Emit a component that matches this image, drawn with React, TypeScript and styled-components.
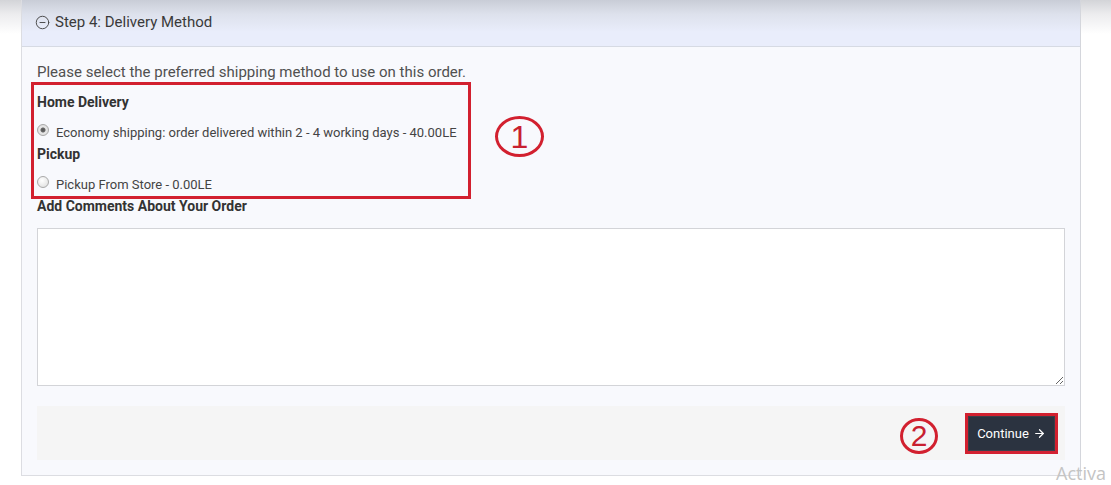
import React from "react";
import styled, { createGlobalStyle } from "styled-components";
import { CircleMinus, ArrowRight } from "lucide-react";

const Global = createGlobalStyle`
  html, body { margin: 0; padding: 0; background: #ffffff; }
  body { font-family: Roboto, "Liberation Sans", Arial, sans-serif; }
  * { box-sizing: border-box; }
`;

const Page = styled.div`
  position: relative;
  width: 1111px;
  height: 485px;
  overflow: hidden;
  padding: 0 30px 0 21px;
  background: linear-gradient(#d3d4d8 0px, #ececee 14px, #ffffff 34px);
`;

const Panel = styled.section`
  border-left: 1px solid #dcdde2;
  border-right: 1px solid #d4d6dc;
  border-bottom: 1px solid #dcdde2;
  background: #f8f9fd;
`;

const Header = styled.header`
  height: 47px;
  display: flex;
  align-items: center;
  gap: 5px;
  padding: 0 0 2px 13px;
  background: linear-gradient(#c9cdd7 0px, #dde1ec 14px, #e9edfb 32px, #e9edfb 100%);
  border-bottom: 1px solid #d6dae3;
  color: #3a3a3a;
  font-size: 15px;
`;

const Body = styled.div`
  padding: 15px 15px 15px 15px;
`;

const Intro = styled.p`
  margin: 0;
  font-size: 15px;
  line-height: 21px;
  color: #505050;
`;

const AnnotatedRow = styled.div`
  display: flex;
  align-items: center;
  gap: 24px;
`;

const RedBox = styled.div`
  width: 440px;
  margin-left: -6px;
  margin-top: -1px;
  border: 3px solid #d2202f;
  padding: 8px 0 2px 3px;
`;

const GroupTitle = styled.div<{ $top?: number }>`
  font-size: 14px;
  line-height: 18px;
  font-weight: 700;
  color: #333;
  margin-top: ${(p) => p.$top ?? 0}px;
`;

const RadioRow = styled.label`
  display: flex;
  align-items: center;
  gap: 7px;
  margin-top: 11px;
  height: 20px;
  padding-left: 0px;
  font-size: 13px;
  color: #444;
`;

const Radio = styled.input.attrs({ type: "radio" })`
  appearance: none;
  margin: 0 0 4px 0;
  width: 12px;
  height: 12px;
  border-radius: 50%;
  border: 1px solid #a9a9a9;
  background: radial-gradient(circle at 40% 35%, #ffffff 0%, #e6e6e6 70%, #cfcfcf 100%);
  &:checked {
    background: radial-gradient(circle, #555 0px, #666 2px, #e8e8e8 3px, #d8d8d8 100%);
  }
`;

const CircleNum = styled.div<{ $w: number; $h: number; $size: number }>`
  width: ${(p) => p.$w}px;
  height: ${(p) => p.$h}px;
  border: 3px solid #d2202f;
  border-radius: 50%;
  display: flex;
  align-items: center;
  justify-content: center;
  color: #c8202f;
  font-family: "Liberation Sans", Arial, sans-serif;
  font-size: ${(p) => p.$size}px;
  font-weight: 400;
  line-height: 1;
  flex-shrink: 0;
`;

const CommentLabel = styled.div`
  font-size: 14px;
  line-height: 18px;
  font-weight: 700;
  color: #333;
  margin-top: -2px;
`;

const Comment = styled.textarea`
  display: block;
  width: 100%;
  height: 158px;
  margin-top: 13px;
  border: 1px solid #d3d4d8;
  background: #ffffff;
  resize: vertical;
  font: inherit;
`;

const Footer = styled.div`
  margin-top: 20px;
  height: 54px;
  background: #f5f5f5;
  display: flex;
  align-items: center;
  justify-content: flex-end;
  gap: 27px;
  padding: 0 7px 0 0;
`;

const ContinueButton = styled.button`
  height: 41px;
  width: 93px;
  border: 3px solid #d2202f;
  background: #2b3340;
  box-shadow: inset 0 0 0 1px #3a3f49;
  color: #fff;
  font-family: Roboto, "Liberation Sans", Arial, sans-serif;
  font-size: 13px;
  display: flex;
  align-items: center;
  justify-content: center;
  gap: 4px;
  padding: 0;
`;

const Watermark = styled.div`
  position: absolute;
  left: 1056px;
  top: 461px;
  font-family: "Open Sans", "DejaVu Sans", sans-serif;
  font-size: 18px;
  color: #c4c4c4;
  white-space: nowrap;
`;

export default function App() {
  return (
    <Page>
      <Global />
      <Panel>
        <Header>
          <CircleMinus size={15} strokeWidth={1.5} color="#444" />
          <span>Step 4: Delivery Method</span>
        </Header>
        <Body>
          <Intro>Please select the preferred shipping method to use on this order.</Intro>
          <AnnotatedRow>
            <RedBox>
              <GroupTitle>Home Delivery</GroupTitle>
              <RadioRow>
                <Radio name="ship" defaultChecked />
                Economy shipping: order delivered within 2 - 4 working days - 40.00LE
              </RadioRow>
              <GroupTitle $top={3}>Pickup</GroupTitle>
              <RadioRow>
                <Radio name="ship" />
                Pickup From Store - 0.00LE
              </RadioRow>
            </RedBox>
            <CircleNum $w={49} $h={41} $size={32} style={{ marginBottom: 9 }}>1</CircleNum>
          </AnnotatedRow>
          <CommentLabel>Add Comments About Your Order</CommentLabel>
          <Comment />
          <Footer>
            <CircleNum $w={38} $h={36} $size={30} style={{ marginTop: 6 }}>2</CircleNum>
            <ContinueButton>
              Continue <ArrowRight size={13} strokeWidth={2.2} />
            </ContinueButton>
          </Footer>
        </Body>
      </Panel>
      <Watermark>Activa</Watermark>
    </Page>
  );
}
